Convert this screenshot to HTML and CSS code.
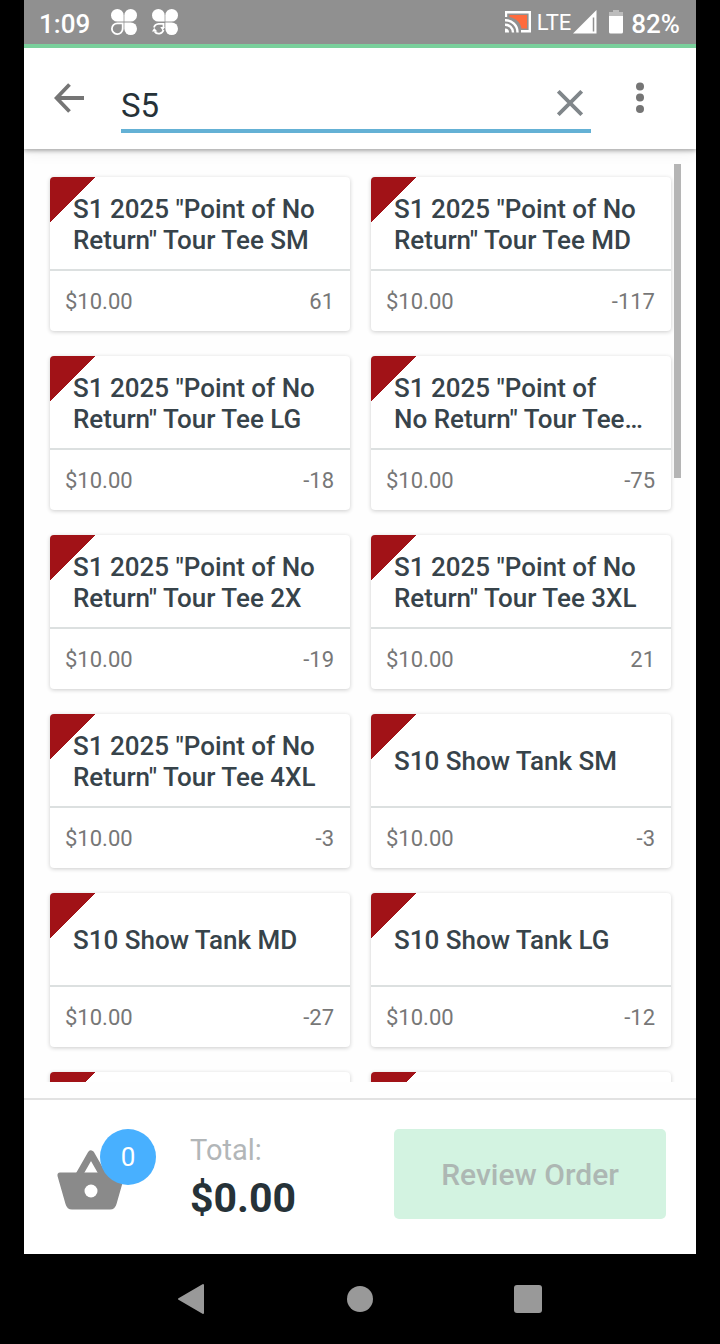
FILE: index.html
```
<!DOCTYPE html>

<html lang="en">
    <head>
        <meta charset="utf-8">
        <meta name="viewport" content="width=device-width, initial-scale=1">
        <title>Items</title>

        <link rel="stylesheet" href="styles.css">
    </head>

    <body>
        <div class="status">
            <span class="status-text">1:09</span>

            <div class="notices">
                <svg width="26" height="26" viewBox="0 0 26 26" fill="#fff">
                    <path d="M12.600 12.600H6.300A6.300 6.300 0 1 1 12.600 6.300z"/>
                    <path d="M13.400 12.600V6.300A6.300 6.300 0 1 1 19.700 12.600z"/>
                    <path d="M13.400 13.400H19.700A6.300 6.300 0 1 1 13.400 19.700z"/>
                    <path d="M11.700 14.300V19.900A5.400 5.400 0 1 1 6.300 14.300z" fill="none" stroke="#fff" stroke-width="1.800"/>
                </svg>

                <svg width="26" height="26" viewBox="0 0 26 26" fill="#fff">
                    <path d="M12.600 12.600H6.300A6.300 6.300 0 1 1 12.600 6.300z"/>
                    <path d="M13.400 12.600V6.300A6.300 6.300 0 1 1 19.700 12.600z"/>
                    <path d="M13.400 13.400H19.700A6.300 6.300 0 1 1 13.400 19.700z"/>
                    <path d="M2 18.500A5 5 0 0 1 6.500 14.800H11.500V18M11.500 21A5 5 0 0 1 2.600 22.500" fill="none" stroke="#fff" stroke-width="1.800"/>
                    <path d="M8.300 18H13L10.600 21.600zM0 22.600L2.200 19L5.400 22.600z"/>
                </svg>
            </div>

            <div class="signals">
                <svg width="26" height="22" viewBox="0 0 26 22">
                    <path d="M4.500 4H22V17.500H16.500C15.500 11.500 11 7 4.500 6z" fill="#ff6b3d"/>
                    <path d="M1 6V1.300H24.800V20.300H16" fill="none" stroke="#fff" stroke-width="2.400"/>
                    <path d="M0 9.200A12 12 0 0 1 12.500 21.500M0 13.700A7.800 7.800 0 0 1 8 21.500" fill="none" stroke="#fff" stroke-width="2.400"/>
                    <path d="M0 17.500A4 4 0 0 1 4 21.500H0z" fill="#fff"/>
                </svg>

                <span class="network">LTE</span>

                <svg class="bars" width="24" height="24" viewBox="0 0 24 24">
                    <path d="M0 23.500L23.500 0V23.500z" fill="#fff"/>
                    <path d="M20.500 7.500V21.500" stroke="#909090" stroke-width="1.500"/>
                </svg>

                <svg class="battery" width="14" height="24" viewBox="0 0 14 24">
                    <path d="M4 0H10V2H14V6H0V2H4z" fill="#bcbcbc"/>
                    <path d="M0 6H14V22Q14 23.500 12.500 23.500H1.500Q0 23.500 0 22z" fill="#fff"/>
                </svg>

                <span class="status-text">82%</span>
            </div>
        </div>

        <header class="top">
            <button class="icon-btn" aria-label="Back">
                <svg width="30" height="30" viewBox="0 0 30 30" fill="none" stroke="#757575" stroke-width="3.800">
                    <path d="M30 15H3M15.500 1.500L2.600 15L15.500 28.500"/>
                </svg>
            </button>

            <div class="search">
                <input type="text" class="box" name="search" value="S5" aria-label="Search items">

                <button class="icon-btn" aria-label="Clear">
                    <svg width="26" height="26" viewBox="0 0 26 26" stroke="#80868a" stroke-width="3.800">
                        <path d="M1.300 1.300L24.700 24.700M24.700 1.300L1.300 24.700"/>
                    </svg>
                </button>
            </div>

            <button class="icon-btn" aria-label="More options">
                <svg width="8" height="32" viewBox="0 0 8 32" fill="#757575">
                    <circle cx="4" cy="4.500" r="4"/>
                    <circle cx="4" cy="15.500" r="4"/>
                    <circle cx="4" cy="27" r="4"/>
                </svg>
            </button>
        </header>

        <main class="items">
            <div class="grid">
                <button class="card">
                    <span class="name">S1 2025 "Point of No Return" Tour Tee SM</span>
                    <span class="info"><span>$10.00</span><span>61</span></span>
                </button>

                <button class="card">
                    <span class="name">S1 2025 "Point of No Return" Tour Tee MD</span>
                    <span class="info"><span>$10.00</span><span>-117</span></span>
                </button>

                <button class="card">
                    <span class="name">S1 2025 "Point of No Return" Tour Tee LG</span>
                    <span class="info"><span>$10.00</span><span>-18</span></span>
                </button>

                <button class="card">
                    <span class="name">S1 2025 "Point of No&nbsp;Return" Tour Tee…</span>
                    <span class="info"><span>$10.00</span><span>-75</span></span>
                </button>

                <button class="card">
                    <span class="name">S1 2025 "Point of No Return" Tour Tee 2X</span>
                    <span class="info"><span>$10.00</span><span>-19</span></span>
                </button>

                <button class="card">
                    <span class="name">S1 2025 "Point of No Return" Tour Tee 3XL</span>
                    <span class="info"><span>$10.00</span><span>21</span></span>
                </button>

                <button class="card">
                    <span class="name">S1 2025 "Point of No Return" Tour Tee 4XL</span>
                    <span class="info"><span>$10.00</span><span>-3</span></span>
                </button>

                <button class="card">
                    <span class="name">S10 Show Tank SM</span>
                    <span class="info"><span>$10.00</span><span>-3</span></span>
                </button>

                <button class="card">
                    <span class="name">S10 Show Tank MD</span>
                    <span class="info"><span>$10.00</span><span>-27</span></span>
                </button>

                <button class="card">
                    <span class="name">S10 Show Tank LG</span>
                    <span class="info"><span>$10.00</span><span>-12</span></span>
                </button>

                <button class="card" aria-label="Item"></button>

                <button class="card" aria-label="Item"></button>
            </div>

            <div class="scroll"></div>
        </main>

        <footer class="bottom">
            <button class="basket" aria-label="Basket">
                <svg width="68" height="60" viewBox="0 0 68 60">
                    <path d="M22 25L34 4L46 25" fill="none" stroke="#8a8a8a" stroke-width="7" stroke-linejoin="round"/>
                    <path d="M3 22.500H65Q68 22.500 67.500 26L59.500 54Q58 59.500 53 59.500H15Q10 59.500 8.500 54L.5 26Q0 22.500 3 22.500z" fill="#8a8a8a"/>
                    <circle cx="34" cy="41" r="6.500" fill="#fff"/>
                </svg>
                <span class="badge">0</span>
            </button>

            <div class="total">
                <div class="tip">Total:</div>
                <div class="sum">$0.00</div>
            </div>

            <button class="btn" disabled>Review Order</button>
        </footer>

        <nav class="keys">
            <button class="icon-btn" aria-label="System back">
                <svg width="28" height="32" viewBox="0 0 28 32" fill="#999" stroke="#999" stroke-width="2" stroke-linejoin="round">
                    <path d="M1 16L25 2V30z"/>
                </svg>
            </button>

            <button class="icon-btn" aria-label="Home">
                <svg width="28" height="28" viewBox="0 0 28 28" fill="#999">
                    <circle cx="14" cy="14" r="13"/>
                </svg>
            </button>

            <button class="icon-btn" aria-label="Recent apps">
                <svg width="28" height="28" viewBox="0 0 28 28" fill="#999">
                    <rect width="28" height="28" rx="3"/>
                </svg>
            </button>
        </nav>
    </body>
</html>
```
FILE: styles.css
```
*
{
    box-sizing: border-box;
}

body
{
    display: flex;
    flex-direction: column;
    height: 100vh;
    margin: 0;
    padding: 0 24px;
    background: black;
    font-family: Roboto, "Liberation Sans", sans-serif;
}

button
{
    padding: 0;
    border: none;
    background: none;
    font-family: inherit;
    cursor: pointer;
}

svg
{
    display: block;
}

.status
{
    display: flex;
    align-items: center;
    height: 48px;
    padding: 0 16px 0 15px;
    background: #909090;
    border-bottom: 4px solid #7ad09c;
    color: white;
}

.status-text
{
    font-size: 26px;
    font-weight: 500;
    line-height: 42px;
    padding-top: 4px;
}

.notices
{
    display: flex;
    gap: 15px;
    margin-left: 21px;
}

.signals
{
    display: flex;
    align-items: center;
    margin-left: auto;
}

.network
{
    margin-left: 6px;
    font-size: 22px;
}

.bars
{
    margin-left: 2px;
}

.battery
{
    margin: 0 8px 0 12px;
}

.top
{
    display: flex;
    align-items: center;
    height: 101px;
    padding: 0 52px 2px 30px;
    background: white;
    box-shadow: 0 2px 4px rgba(0, 0, 0, 0.3), 0 4px 14px rgba(0, 0, 0, 0.06);
    clip-path: inset(0 0 -20px 0);
    z-index: 1;
}

.search
{
    display: flex;
    flex: 1;
    align-items: center;
    align-self: flex-end;
    height: 62px;
    margin: 0 45px 14px 37px;
    padding: 6px 8px 0 0;
    border-bottom: 4px solid #64b1d5;
}

.box
{
    flex: 1;
    min-width: 0;
    padding: 4px 0 0;
    border: none;
    outline: none;
    background: none;
    color: #263238;
    font-family: inherit;
    font-size: 33px;
}

.items
{
    position: relative;
    flex: 1;
    min-height: 0;
    background: #fefefe;
    border-bottom: 16px solid #fefefe;
    overflow: hidden;
}

.grid
{
    display: grid;
    grid-template-columns: 1fr 1fr;
    gap: 25px 21px;
    padding: 28px 25px 0 26px;
}

.card
{
    display: flex;
    flex-direction: column;
    height: 154px;
    border-radius: 4px;
    background: linear-gradient(135deg, #a11217 32px, transparent 32px), white;
    box-shadow: 0 1px 4px rgba(0, 0, 0, 0.2);
    text-align: left;
}

.name
{
    display: flex;
    align-items: center;
    width: 100%;
    height: 94px;
    padding: 3px 22px 0 23px;
    border-bottom: 2px solid #dce0e0;
    color: #37434a;
    font-size: 26px;
    font-weight: 500;
    line-height: 31px;
}

.info
{
    display: flex;
    flex: 1;
    align-items: center;
    justify-content: space-between;
    width: 100%;
    padding: 0 16px 0 15px;
    color: #777;
    font-size: 22px;
}

.scroll
{
    position: absolute;
    top: 15px;
    right: 15px;
    width: 7px;
    height: 314px;
    background: #b5b5b5;
}

.bottom
{
    display: flex;
    align-items: center;
    height: 156px;
    padding: 0 30px 6px 33px;
    background: white;
    border-top: 2px solid #e2e2e2;
}

.basket
{
    position: relative;
    margin-top: 12px;
}

.badge
{
    position: absolute;
    top: -21px;
    left: 43px;
    width: 56px;
    border-radius: 50%;
    background: #48b0ff;
    color: white;
    font-size: 26px;
    line-height: 56px;
}

.total
{
    margin-left: 65px;
    padding-top: 4px;
}

.tip
{
    color: #b2b6b8;
    font-size: 29px;
    line-height: 44px;
}

.sum
{
    color: #263238;
    font-size: 41px;
    font-weight: bold;
    line-height: 52px;
}

.btn
{
    width: 272px;
    height: 90px;
    margin-left: auto;
    border-radius: 5px;
    background: #d3f3e1;
    color: #adb7b3;
    font-size: 30px;
    font-weight: 500;
}

.keys
{
    display: flex;
    align-items: center;
    justify-content: space-around;
    height: 90px;
    padding: 0 84px;
}
```
